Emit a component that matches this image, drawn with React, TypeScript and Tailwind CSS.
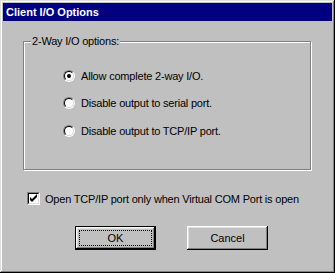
import React from 'react';

const font = { fontFamily: '"Liberation Sans", Arial, sans-serif' };

function Radio({ checked, label }: { checked?: boolean; label: string }) {
  return (
    <div className="flex items-center h-[12px]">
      <div className="w-[12px] h-[12px] rounded-full border border-t-[#808080] border-l-[#808080] border-b-white border-r-white">
        <div className="w-full h-full rounded-full border border-t-black border-l-black border-b-[#dfdfdf] border-r-[#dfdfdf] bg-white flex items-center justify-center">
          {checked && <div className="w-[4px] h-[4px] rounded-full bg-black" />}
        </div>
      </div>
      <span className="ml-[6px] text-[11px] leading-[12px] tracking-[-0.2px] text-black">{label}</span>
    </div>
  );
}

export default function App() {
  return (
    <div
      className="w-[335px] h-[273px] bg-[#c0c0c0] p-[3px] flex flex-col shadow-[inset_-1px_-1px_#000,inset_1px_1px_#dfdfdf,inset_-2px_-2px_#808080,inset_2px_2px_#fff]"
      style={font}
    >
      {/* Title bar */}
      <div className="h-[18px] bg-[#000080] text-white font-bold text-[11px] flex items-center pl-[3px]">
        Client I/O Options
      </div>

      {/* Group box */}
      <div className="relative mt-[20px] ml-[20px] w-[288px] h-[129px] border border-[#808080] shadow-[inset_1px_1px_#fff,1px_1px_#fff]">
        <span className="absolute left-[7px] top-[-7px] px-[1px] bg-[#c0c0c0] text-[11px] leading-[12px] tracking-[-0.2px] text-black">
          2-Way I/O options:
        </span>
        <div className="flex flex-col pl-[39px] pt-[28px]">
          <Radio checked label="Allow complete 2-way I/O." />
          <div className="mt-[15px]">
            <Radio label="Disable output to serial port." />
          </div>
          <div className="mt-[16px]">
            <Radio label="Disable output to TCP/IP port." />
          </div>
        </div>
      </div>

      {/* Checkbox */}
      <div className="flex items-center mt-[22px] ml-[24px] h-[13px]">
        <div className="w-[13px] h-[13px] border border-t-[#808080] border-l-[#808080] border-b-white border-r-white">
          <div className="w-full h-full border border-t-black border-l-black border-b-[#dfdfdf] border-r-[#dfdfdf] bg-white">
            <svg width="9" height="9" viewBox="0 0 9 9" className="block">
              <path d="M1 3v3l2 2l5-5V0L3 5z" fill="black" />
            </svg>
          </div>
        </div>
        <span className="ml-[5px] text-[11px] leading-[12px] tracking-[-0.2px] text-black">
          Open TCP/IP port only when Virtual COM Port is open
        </span>
      </div>

      {/* Buttons */}
      <div className="flex mt-[21px] ml-[72px] gap-[31px]">
        <div className="w-[81px] h-[24px] border border-black">
          <div className="w-full h-full shadow-[inset_-1px_-1px_#000,inset_1px_1px_#fff,inset_-2px_-2px_#808080,inset_2px_2px_#dfdfdf] p-[3px]">
            <div className="w-full h-full border border-dotted border-black flex items-center justify-center text-[11px] text-black">
              OK
            </div>
          </div>
        </div>
        <div className="w-[81px] h-[24px] shadow-[inset_-1px_-1px_#000,inset_1px_1px_#fff,inset_-2px_-2px_#808080,inset_2px_2px_#dfdfdf] flex items-center justify-center text-[11px] text-black">
          Cancel
        </div>
      </div>
    </div>
  );
}
